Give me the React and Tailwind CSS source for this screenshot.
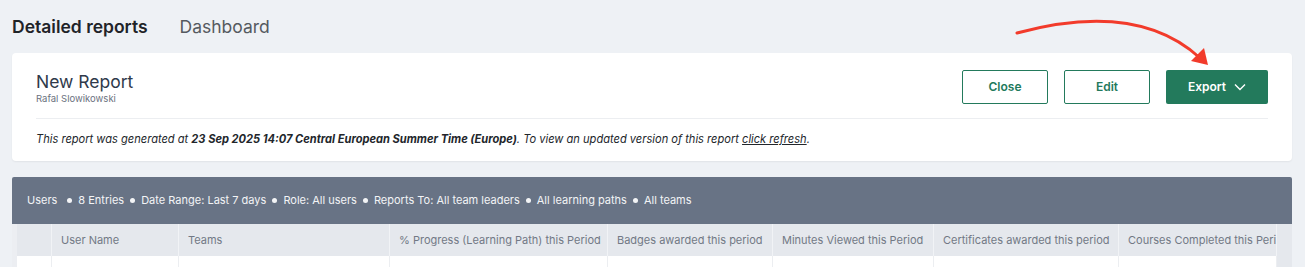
import React from 'react';

const columns = [
  { label: '', w: 'w-[35px]' },
  { label: 'User Name', w: 'w-[127px]' },
  { label: 'Teams', w: 'w-[211px]' },
  { label: '% Progress (Learning Path) this Period', w: 'w-[218px]' },
  { label: 'Badges awarded this period', w: 'w-[165px]' },
  { label: 'Minutes Viewed this Period', w: 'w-[161px]' },
  { label: 'Certificates awarded this period', w: 'w-[185px]' },
  { label: 'Courses Completed this Period', w: 'w-[158px]' },
];

const filters = ['8 Entries', 'Date Range: Last 7 days', 'Role: All users', 'Reports To: All team leaders', 'All learning paths', 'All teams'];

const Arrow = () => (
  <svg className="absolute left-0 top-0 pointer-events-none" width="1305" height="90" viewBox="0 0 1305 90">
    <path d="M1017 33 C 1080 16, 1150 12, 1200 58" fill="none" stroke="#f23b2b" strokeWidth="3" strokeLinecap="round" />
    <polygon points="1208,65 1191,61 1204,48" fill="#f23b2b" />
  </svg>
);

const App = () => {
  return (
    <div className="relative w-[1305px] h-[267px] overflow-hidden bg-[#eef1f5] font-['Inter',sans-serif]">
      <div className="flex items-center gap-[32px] px-3 h-[53px] pt-[2px]">
        <div className="text-[17.5px] font-semibold text-[#1f2328]">Detailed reports</div>
        <div className="text-[17.5px] text-[#555a60]">Dashboard</div>
      </div>

      <div className="ml-3 w-[1280px] bg-white rounded shadow-[0_1px_2px_rgba(0,0,0,0.06)] px-6 pt-[17px] h-[108px]">
        <div className="flex items-start justify-between">
          <div className="pt-[1px]">
            <div className="text-[17.5px] leading-[22px] text-[#2f3a4b]">New Report</div>
            <div className="text-[9.5px] leading-[12px] text-[#6b7280]">Rafal Slowikowski</div>
          </div>
          <div className="flex gap-4">
            <button className="w-[86px] h-[34px] rounded-[2px] border border-[#237a5c] text-[#237a5c] text-[12px] font-semibold">Close</button>
            <button className="w-[86px] h-[34px] rounded-[2px] border border-[#237a5c] text-[#237a5c] text-[12px] font-semibold">Edit</button>
            <button className="w-[102px] h-[34px] rounded-[2px] bg-[#237a5c] text-white text-[12px] font-semibold flex items-center justify-center gap-2">
              Export
              <svg width="12" height="8" viewBox="0 0 12 8"><path d="M1 1.5 L6 6.5 L11 1.5" fill="none" stroke="white" strokeWidth="1.4" /></svg>
            </button>
          </div>
        </div>
        <div className="mt-[13px] border-t border-[#eceef1]" />
        <div className="pt-[12px] text-[11.1px] italic text-[#22262b]">
          This report was generated at <span className="font-bold">23 Sep 2025 14:07 Central European Summer Time (Europe)</span>. To view an updated version of this report <span className="underline">click refresh</span>.
        </div>
      </div>

      <div className="ml-3 w-[1280px] mt-4 rounded-t-[2px] overflow-hidden">
        <div className="h-[47px] bg-[#687385] flex items-center px-[15px] text-[11px] text-[#f3f4f6]">
          <span className="mr-[4px]">Users</span>
          {filters.map((f) => (
            <span key={f} className="flex items-center">
              <span className="inline-block w-[5px] h-[5px] rounded-full bg-[#f3f4f6] mx-[6px]" />
              {f}
            </span>
          ))}
        </div>
        <div className="flex bg-[#e5e8ed]">
          <div className="w-[5px] bg-[#eceef2]" />
          <div className="w-[1260px] overflow-hidden">
            <div className="flex h-[32px]">
              {columns.map((c, i) => (
                <div key={i} className={`${c.w} shrink-0 flex items-center px-[9px] text-[11px] text-[#727985] whitespace-nowrap overflow-hidden border-r border-[#f1f3f6]`}>
                  {c.label}
                </div>
              ))}
            </div>
            <div className="flex h-[20px] bg-white">
              {columns.map((c, i) => (
                <div key={i} className={`${c.w} shrink-0 border-r border-[#eceef1]`} />
              ))}
            </div>
          </div>
        </div>
      </div>

      <Arrow />
    </div>
  );
};

export default App;
